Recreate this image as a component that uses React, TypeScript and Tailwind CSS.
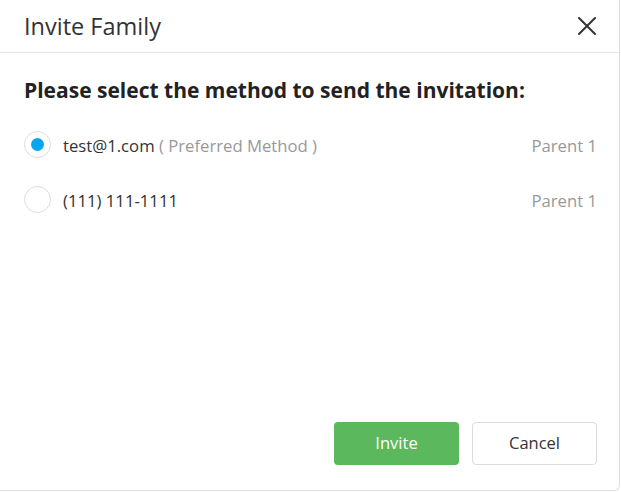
const options = [
  { id: "email", label: "test@1.com", note: "( Preferred Method )", who: "Parent 1", checked: true },
  { id: "phone", label: "(111) 111-1111", note: "", who: "Parent 1", checked: false },
];

function Radio({ checked }: { checked: boolean }) {
  return (
    <span className="flex h-[27px] w-[27px] shrink-0 items-center justify-center rounded-full border border-[#dcdcdc] bg-white">
      {checked && <span className="h-[13px] w-[13px] rounded-full bg-[#08a6f2]" />}
    </span>
  );
}

export default function App() {
  return (
    <div className="h-[492px] w-[621px] bg-white font-['Open_Sans',sans-serif]">
      <div className="flex h-[491px] w-[620px] flex-col rounded-br-[6px] border-b border-r border-[#dedede] bg-white">
        <header className="flex h-[53px] items-center justify-between border-b border-[#e2e2e2] pl-6 pr-[23px]">
          <h1 className="m-0 text-[23.5px] font-normal leading-[30px] text-[#333]">Invite Family</h1>
          <svg width="18" height="18" viewBox="0 0 18 18" className="text-[#333]">
            <path d="M1 1L17 17M17 1L1 17" stroke="currentColor" strokeWidth="2" strokeLinecap="round" />
          </svg>
        </header>

        <div className="flex-1 pl-6 pr-[22px] pt-[22px]">
          <h2 className="m-0 text-[21px] font-bold leading-[30px] text-[#222]">
            Please select the method to send the invitation:
          </h2>
          <ul className="m-0 mt-[12px] list-none p-0">
            {options.map((o) => (
              <li key={o.id} className="flex h-[55px] items-center gap-3">
                <Radio checked={o.checked} />
                <span className="flex-1 pt-[2px] text-[16.7px] text-[#333]">
                  {o.label}
                  {o.note && <span className="text-[#999]"> {o.note}</span>}
                </span>
                <span className="pt-[2px] text-[16.7px] text-[#999]">{o.who}</span>
              </li>
            ))}
          </ul>
        </div>

        <footer className="flex justify-end gap-[13px] pb-[25px] pr-[22px]">
          <button className="h-[43px] w-[125px] rounded-[4px] bg-[#5cb85c] text-[16.5px] text-white">
            Invite
          </button>
          <button className="h-[43px] w-[125px] rounded-[4px] border border-[#dcdcdc] bg-white text-[16.5px] text-[#333]">
            Cancel
          </button>
        </footer>
      </div>
    </div>
  );
}
